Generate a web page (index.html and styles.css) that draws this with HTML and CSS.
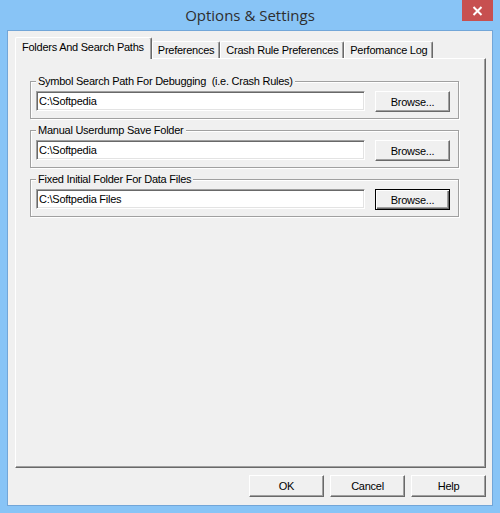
FILE: index.html
```html
<!DOCTYPE html>
<html lang="en">
<head>
  <meta charset="UTF-8">
  <title>Options &amp; Settings</title>
  <link rel="stylesheet" href="styles.css">
</head>
<body>
  <div class="window">
    <div class="titlebar">
      <span class="title">Options &amp; Settings</span>
      <button class="close" aria-label="Close">
        <svg width="11" height="10" viewBox="0 0 11 10"><path d="M1.5 1 L9.5 9 M9.5 1 L1.5 9" stroke="#fff" stroke-width="2"/></svg>
      </button>
    </div>

    <div class="client">
      <div class="tabs">
        <div class="tab active">Folders And Search Paths</div>
        <div class="tab">Preferences</div>
        <div class="tab">Crash Rule Preferences</div>
        <div class="tab">Perfomance Log</div>
      </div>

      <div class="panel">
        <fieldset class="group">
          <legend>Symbol Search Path For Debugging&nbsp; (i.e. Crash Rules)</legend>
          <div class="row">
            <input class="field" type="text" value="C:\Softpedia">
            <button class="btn browse">Browse...</button>
          </div>
        </fieldset>

        <fieldset class="group">
          <legend>Manual Userdump Save Folder</legend>
          <div class="row">
            <input class="field" type="text" value="C:\Softpedia">
            <button class="btn browse">Browse...</button>
          </div>
        </fieldset>

        <fieldset class="group">
          <legend>Fixed Initial Folder For Data Files</legend>
          <div class="row">
            <input class="field" type="text" value="C:\Softpedia Files">
            <button class="btn browse default">Browse...</button>
          </div>
        </fieldset>
      </div>

      <div class="actions">
        <button class="btn">OK</button>
        <button class="btn">Cancel</button>
        <button class="btn">Help</button>
      </div>
    </div>
  </div>
</body>
</html>
```

FILE: styles.css
```css
body {
  margin: 0;
  font-family: "Liberation Sans", Arial, sans-serif;
  font-size: 11px;
  letter-spacing: -0.25px;
  color: #000;
}
.window {
  position: relative;
  width: 500px;
  height: 513px;
  box-sizing: border-box;
  background: #88c4f6;
  padding: 0 7px 7px;
  display: flex;
  flex-direction: column;
}
.titlebar {
  height: 30px;
  display: flex;
  align-items: center;
  justify-content: center;
}
.title {
  font-family: "Open Sans", "Noto Sans", sans-serif;
  font-size: 15px;
  letter-spacing: 0;
  color: #2e2e2e;
  margin-top: -1px;
}
.close {
  position: absolute;
  top: 0;
  right: 7px;
  width: 31px;
  height: 21px;
  padding: 0;
  border: none;
  background: #c75050;
  display: flex;
  align-items: center;
  justify-content: center;
}
.client {
  flex: 1;
  display: flex;
  flex-direction: column;
  background: #f0f0f0;
  border: 1px solid #72a6d8;
  padding: 6px 6px 8px 7px;
}
.tabs {
  display: flex;
  align-items: flex-end;
  height: 21px;
  position: relative;
  z-index: 1;
}
.tab {
  height: 17px;
  box-sizing: border-box;
  padding: 2px 5px 0;
  line-height: 13px;
  background: #f0f0f0;
  border-top: 1px solid #fff;
  border-left: 1px solid #fff;
  border-right: 1px solid #696969;
  box-shadow: inset -1px 0 #a0a0a0;
  border-radius: 2px 2px 0 0;
  white-space: nowrap;
}
.tab.active {
  height: 22px;
  margin-bottom: -1px;
  padding: 3px 7px 0 6px;
}
.panel {
  flex: 1;
  border: 1px solid;
  border-color: #fff #696969 #696969 #fff;
  box-shadow: inset -1px -1px #a0a0a0;
  padding: 16px 0 0 14px;
}
.group {
  width: 429px;
  box-sizing: border-box;
  margin: 0 0 5px;
  padding: 3px 8px 6px 5px;
  border: 1px solid #a0a0a0;
  box-shadow: inset 1px 1px #fff, 1px 1px #fff;
}
.group legend {
  padding: 0 2px;
  line-height: 13px;
  background: #f0f0f0;
}
.row {
  display: flex;
  gap: 10px;
}
.field {
  width: 329px;
  height: 20px;
  box-sizing: border-box;
  margin: 0;
  padding: 0 2px;
  font: inherit;
  letter-spacing: inherit;
  color: #000;
  background: #fff;
  border: 1px solid;
  border-color: #a0a0a0 #fff #fff #a0a0a0;
  box-shadow: inset 1px 1px #696969, inset -1px -1px #e3e3e3;
  outline: none;
}
.btn {
  width: 75px;
  height: 22px;
  box-sizing: border-box;
  margin: 0;
  padding: 0;
  font: inherit;
  letter-spacing: inherit;
  color: #000;
  background: #f0f0f0;
  border: 1px solid;
  border-color: #fff #696969 #696969 #fff;
  box-shadow: inset -1px -1px #a0a0a0;
}
.btn.browse {
  height: 21px;
}
.btn.default {
  border-color: #000;
  box-shadow: inset 1px 1px #fff, inset -1px -1px #696969, inset -2px -2px #a0a0a0;
}
.actions {
  display: flex;
  justify-content: flex-end;
  gap: 6px;
  margin-top: 7px;
}
```
